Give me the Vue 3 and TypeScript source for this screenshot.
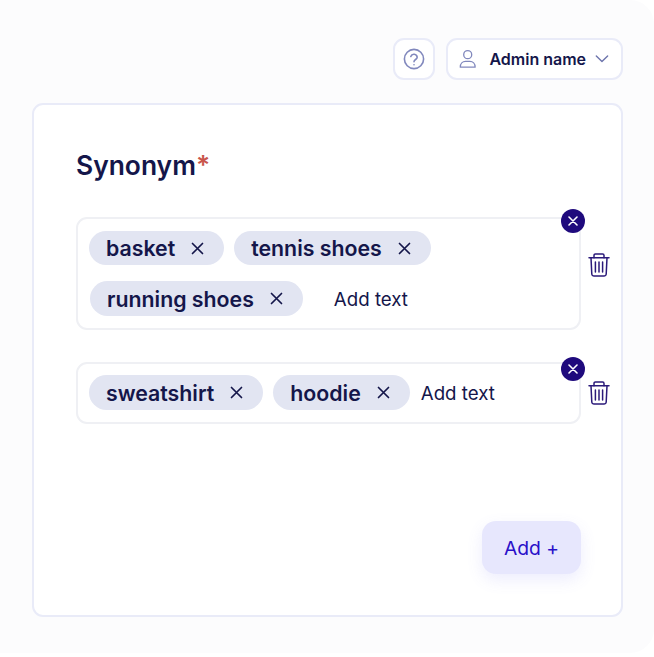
<script setup lang="ts">
interface SynonymGroup {
  id: number
  tags: string[]
  wideInput?: boolean
}

const groups: SynonymGroup[] = [
  { id: 1, tags: ['basket', 'tennis shoes', 'running shoes'], wideInput: true },
  { id: 2, tags: ['sweatshirt', 'hoodie'] },
]
</script>

<template>
  <div class="page">
    <header class="topbar">
      <button class="top-btn help-btn" aria-label="Help">
        <svg width="22" height="22" viewBox="0 0 22 22" fill="none" stroke="#8188bd" stroke-width="1.6" stroke-linecap="round" stroke-linejoin="round">
          <circle cx="11" cy="11" r="9.6" />
          <path d="M7.8 8.4a3.3 3.3 0 0 1 6.4.8c0 2.1-3.2 2.5-3.2 4.5" />
          <path d="M11 16.7v.1" />
        </svg>
      </button>
      <button class="top-btn admin-btn">
        <svg width="20" height="22" viewBox="0 0 20 22" fill="none" stroke="#8188bd" stroke-width="1.5" stroke-linecap="round" stroke-linejoin="round">
          <circle cx="10" cy="6" r="4.6" />
          <path d="M1.5 20.4c0-4 2.6-6.6 6-6.6h5c3.4 0 6 2.6 6 6.6z" />
        </svg>
        <span class="admin-name">Admin name</span>
        <svg width="16" height="10" viewBox="0 0 16 10" fill="none" stroke="#6d74ac" stroke-width="1.6" stroke-linecap="round" stroke-linejoin="round">
          <path d="M1.5 1.5 8 8l6.5-6.5" />
        </svg>
      </button>
    </header>

    <main class="card">
      <h2 class="title">Synonym<span class="required">*</span></h2>

      <div class="groups">
        <div v-for="group in groups" :key="group.id" class="group" :class="{ wide: group.wideInput }">
          <div class="field">
            <span v-for="tag in group.tags" :key="tag" class="tag">
              {{ tag }}
              <svg class="tag-x" width="13" height="13" viewBox="0 0 13 13" fill="none" stroke="#14164a" stroke-width="1.7" stroke-linecap="round">
                <path d="M1.5 1.5l10 10M11.5 1.5l-10 10" />
              </svg>
            </span>
            <span class="add-text">Add text</span>
            <button class="clear-btn" aria-label="Remove">
              <svg width="10" height="10" viewBox="0 0 10 10" fill="none" stroke="#fff" stroke-width="1.6" stroke-linecap="round">
                <path d="M1 1l8 8M9 1 1 9" />
              </svg>
            </button>
          </div>
          <button class="trash-btn" aria-label="Delete">
            <svg width="22" height="24" viewBox="0 0 22 24" fill="none" stroke="#2b1a7a" stroke-width="1.5" stroke-linecap="round" stroke-linejoin="round">
              <path d="M1 4.8h20" />
              <path d="M6 4.8V2.4C6 1.6 6.6 1 7.4 1h7.2c.8 0 1.4.6 1.4 1.4v2.4" />
              <path d="M3 4.8l.8 16.4c.1 1.1.9 1.8 2 1.8h10.4c1.1 0 1.9-.7 2-1.8L19 4.8" />
              <path d="M7.4 9v10M11 9v10M14.6 9v10" />
            </svg>
          </button>
        </div>
      </div>

      <div class="actions">
        <button class="add-btn">Add +</button>
      </div>
    </main>
  </div>
</template>

<style>
html,
body {
  margin: 0;
  background: #fff;
}
</style>

<style scoped>
.page {
  box-sizing: border-box;
  width: 654px;
  height: 653px;
  padding: 38px 31px 36px 32px;
  background: #fcfcfd;
  border-radius: 0 24px 24px 0;
  display: flex;
  flex-direction: column;
  gap: 23px;
  font-family: Inter, "Liberation Sans", sans-serif;
  color: #14164a;
}

.topbar {
  display: flex;
  justify-content: flex-end;
  gap: 11px;
}

.top-btn {
  box-sizing: border-box;
  height: 42px;
  background: #fff;
  border: 2px solid #e9ebf8;
  border-radius: 11px;
  display: flex;
  align-items: center;
  font-family: inherit;
  color: inherit;
  padding: 0;
}

.help-btn {
  width: 42px;
  justify-content: center;
}

.admin-btn {
  width: 177px;
  padding: 0 12px 0 11px;
}

.admin-name {
  margin-left: 13px;
  margin-right: 9px;
  font-size: 16px;
  font-weight: 600;
  white-space: nowrap;
}

.card {
  box-sizing: border-box;
  flex: 1;
  background: #fff;
  border: 2px solid #e9ebf8;
  border-radius: 11px;
  padding: 44px 40px 41px 42px;
  display: flex;
  flex-direction: column;
}

.title {
  margin: 0;
  font-size: 26.4px;
  line-height: 32px;
  font-weight: 600;
}

.required {
  color: #c9564c;
}

.groups {
  margin-top: 36.3px;
  display: flex;
  flex-direction: column;
  gap: 31.5px;
}

.group {
  display: flex;
  align-items: center;
  gap: 7px;
  margin-right: -31px;
}

.field {
  position: relative;
  box-sizing: border-box;
  width: 505px;
  border: 2px solid #eff0f4;
  border-radius: 11px;
  padding: 11.5px 11px 12.5px;
  display: flex;
  flex-wrap: wrap;
  align-items: center;
  gap: 16px 10px;
}

.tag {
  height: 34.5px;
  padding: 0 20px 0 17px;
  background: #e2e5f2;
  border-radius: 17.5px;
  display: inline-flex;
  align-items: center;
  gap: 16px;
  font-size: 21.3px;
  font-weight: 600;
  white-space: nowrap;
}

.tag-x {
  flex: none;
}

.add-text {
  margin-left: 1px;
  padding-top: 2.5px;
  font-size: 18.7px;
  line-height: 32px;
  white-space: nowrap;
}

.wide .add-text {
  margin-left: 21px;
}

.wide .tag:nth-child(3) {
  margin-left: 1px;
}

.clear-btn {
  position: absolute;
  top: -6.5px;
  right: -6px;
  width: 24px;
  height: 24px;
  padding: 0;
  border: none;
  border-radius: 50%;
  background: #1f0a7d;
  display: flex;
  align-items: center;
  justify-content: center;
}

.wide .clear-btn {
  top: -10px;
}

.trash-btn {
  padding: 0;
  border: none;
  background: none;
  display: flex;
}

.wide .trash-btn {
  margin-bottom: 17px;
}

.actions {
  margin-top: auto;
  display: flex;
  justify-content: flex-end;
}

.add-btn {
  width: 99px;
  height: 53px;
  padding: 0;
  border: none;
  border-radius: 14px;
  background: #e7e7fd;
  color: #2a10c9;
  font-family: inherit;
  font-size: 19.3px;
  box-shadow: 0 6px 16px rgba(106, 106, 240, 0.12);
}
</style>
